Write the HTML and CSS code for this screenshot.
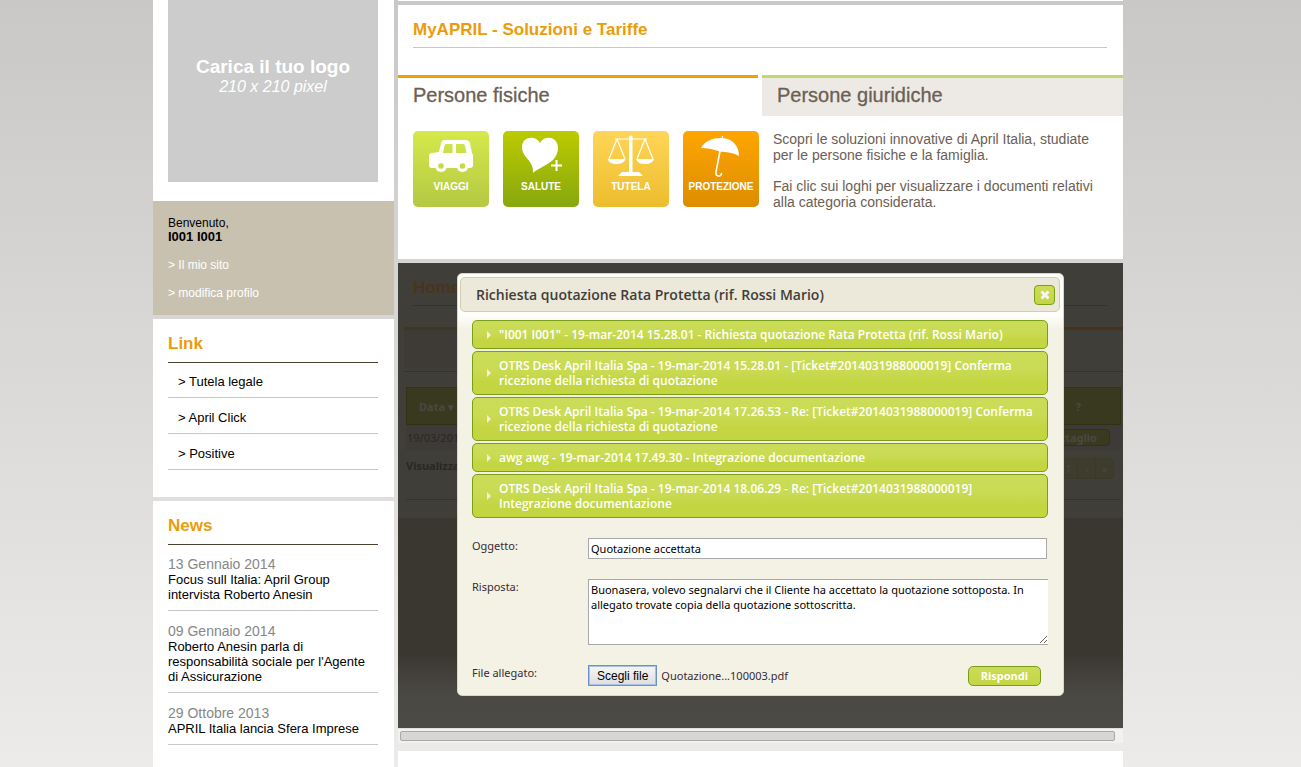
FILE: index.html
```html
<!DOCTYPE html>
<html lang="it">
<head>
<meta charset="utf-8">
<title>MyAPRIL - Soluzioni e Tariffe</title>
<link rel="stylesheet" href="styles.css">
</head>
<body>
<div class="page">
  <aside class="sidebar">
    <section class="brand-box">
      <div class="logo-placeholder"><strong>Carica il tuo logo</strong><em>210 x 210 pixel</em></div>
    </section>
    <section class="user-box">
      <p>Benvenuto,<br><strong>I001 I001</strong></p>
      <a href="#">&gt; Il mio sito</a>
      <a href="#">&gt; modifica profilo</a>
    </section>
    <section class="side-panel link-panel">
      <h2>Link</h2>
      <ul class="link-list">
        <li><a href="#">&gt; Tutela legale</a></li>
        <li><a href="#">&gt; April Click</a></li>
        <li><a href="#">&gt; Positive</a></li>
      </ul>
    </section>
    <section class="side-panel news-panel">
      <h2>News</h2>
      <ul class="news-list">
        <li><time>13 Gennaio 2014</time><a href="#">Focus sull Italia: April Group intervista Roberto Anesin</a></li>
        <li><time>09 Gennaio 2014</time><a href="#">Roberto Anesin parla di responsabilità sociale per l'Agente di Assicurazione</a></li>
        <li><time>29 Ottobre 2013</time><a href="#">APRIL Italia lancia Sfera Imprese</a></li>
      </ul>
    </section>
  </aside>

  <main class="main">
    <div class="top-strip"></div>
    <section class="solutions">
      <h1>MyAPRIL - Soluzioni e Tariffe</h1>
      <nav class="tabs">
        <a class="tab tab-active" href="#">Persone fisiche</a>
        <a class="tab tab-idle" href="#">Persone giuridiche</a>
      </nav>
      <div class="tab-body">
        <div class="tiles">
          <a class="tile tile-lime" href="#">
            <svg viewBox="0 0 76 76" aria-hidden="true">
              <path fill="#fff" fill-rule="evenodd" d="M31 9H53Q56 9 57 12L59 22Q60 23 60 25V34Q60 37 57 37H19Q16 37 16 34V25Q16 22 19 22L26 21L28 12Q29 9 31 9ZM33 13Q32 13 31.500 14.500L30 22H39.500V13ZM43 13V22H53.500L52 14.500Q51.500 13 50.500 13Z"/>
              <circle cx="28" cy="35" r="6" fill="#fff"/><circle cx="49.500" cy="35" r="6" fill="#fff"/>
              <circle cx="28" cy="35" r="2.800" fill="#c6da48"/><circle cx="49.500" cy="35" r="2.800" fill="#c6da48"/>
            </svg>
            <span>VIAGGI</span>
          </a>
          <a class="tile tile-green" href="#">
            <svg viewBox="0 0 76 76" aria-hidden="true">
              <path fill="#fff" d="M30 42C31 29 19 27 19 16C19 5 33 4 37 12C41 4 55 5 55 17C55 27 47 32 41 35C36 38 33 39 30 42Z"/>
              <path fill="none" stroke="#fff" stroke-width="2" d="M53.500 29V40M48 34.500H59"/>
            </svg>
            <span>SALUTE</span>
          </a>
          <a class="tile tile-yellow" href="#">
            <svg viewBox="0 0 76 76" aria-hidden="true">
              <path fill="none" stroke="#fff" stroke-width="1.200" d="M22 8H54M24 8L16 28M24 8L32 28M52 8L44 28M52 8L60 28"/>
              <path fill="#fff" d="M14.500 28H32.500Q31 33 23.500 33Q16 33 14.500 28ZM43 28H61Q59.500 33 52 33Q44.500 33 43 28ZM36 8H39.500V41H46L50 45H25L29 41H36Z"/>
              <circle cx="37.700" cy="6.500" r="2" fill="#fff"/>
            </svg>
            <span>TUTELA</span>
          </a>
          <a class="tile tile-orange" href="#">
            <svg viewBox="0 0 76 76" aria-hidden="true">
              <path fill="#fff" d="M38.800 5H40.200L40 7C50 8 56 15 56 25C51 22 44 21 37 20.500C30 18 24 17 18 17C22 10 29 7 38.500 7Z"/>
              <path fill="none" stroke="#fff" stroke-width="1.600" stroke-linecap="round" d="M37 20L33 41C32 46 38 46 38.500 42.500"/>
            </svg>
            <span>PROTEZIONE</span>
          </a>
        </div>
        <div class="intro">
          <p>Scopri le soluzioni innovative di April Italia, studiate per le persone fisiche e la famiglia.</p>
          <p>Fai clic sui loghi per visualizzare i documenti relativi alla categoria considerata.</p>
        </div>
      </div>
    </section>

    <section class="frame">
      <div class="viewport">
        <div class="backdrop-content" aria-hidden="true">
          <div class="ghost-title">Home</div>
          <div class="ghost-tabs"><span></span><span></span></div>
          <div class="ghost-table">
            <div class="ghost-head"><span>Data &#9662;</span><span class="ghost-help">?</span></div>
            <div class="ghost-row"><span>19/03/2014</span><span class="ghost-button">Dettaglio</span></div>
            <div class="ghost-foot"><b>Visualizza</b><span class="ghost-pages"><i>1</i><i>›</i><i>»</i></span></div>
          </div>
        </div>

        <div class="dialog" role="dialog" aria-labelledby="dialog-title">
          <header class="dialog-head">
            <h2 id="dialog-title">Richiesta quotazione Rata Protetta (rif. Rossi Mario)</h2>
            <button class="close" type="button" aria-label="Chiudi">
              <svg viewBox="0 0 10 10" aria-hidden="true"><path d="M1.500 1.500L8.500 8.500M8.500 1.500L1.500 8.500"/></svg>
            </button>
          </header>
          <div class="dialog-body">
            <div class="messages">
              <button type="button">"I001 I001" - 19-mar-2014 15.28.01 - Richiesta quotazione Rata Protetta (rif. Rossi Mario)</button>
              <button type="button">OTRS Desk April Italia Spa - 19-mar-2014 15.28.01 - [Ticket#2014031988000019] Conferma<br>ricezione della richiesta di quotazione</button>
              <button type="button">OTRS Desk April Italia Spa - 19-mar-2014 17.26.53 - Re: [Ticket#2014031988000019] Conferma<br>ricezione della richiesta di quotazione</button>
              <button type="button">awg awg - 19-mar-2014 17.49.30 - Integrazione documentazione</button>
              <button type="button">OTRS Desk April Italia Spa - 19-mar-2014 18.06.29 - Re: [Ticket#2014031988000019]<br>Integrazione documentazione</button>
            </div>
            <form class="reply">
              <label for="subject">Oggetto:</label>
              <input class="subject" id="subject" type="text" value="Quotazione accettata">
              <label for="answer">Risposta:</label>
              <textarea id="answer">Buonasera, volevo segnalarvi che il Cliente ha accettato la quotazione sottoposta. In allegato trovate copia della quotazione sottoscritta.</textarea>
              <span>File allegato:</span>
              <div class="file-row">
                <input class="file-input" id="attachment" type="file">
                <label class="file-button" for="attachment">Scegli file</label>
                <span class="file-name">Quotazione...100003.pdf</span>
                <button class="submit" type="button">Rispondi</button>
              </div>
            </form>
          </div>
        </div>
      </div>
      <div class="scrollbar"><div class="thumb"></div></div>
    </section>
    <div class="bottom-panel"></div>
  </main>
</div>
</body>
</html>
```
FILE: styles.css
```css
* { box-sizing: border-box; }
html { height: 100%; overflow: hidden; }
body {
  margin: 0;
  height: 100%;
  padding-right: 25px;
  overflow: hidden;
  background: linear-gradient(#c9c8c6, #ecebe9);
  font-family: "Liberation Sans", Arial, sans-serif;
  font-size: 13px;
  color: #000;
}
h1, h2, p, ul { margin: 0; padding: 0; }
ul { list-style: none; }
a { color: inherit; text-decoration: none; }
button, input, textarea { font: inherit; margin: 0; }

.page { display: flex; gap: 4px; max-width: 970px; min-height: 100%; margin: 0 auto; }
.sidebar { display: flex; flex-direction: column; flex: 0 0 241px; }
.main { display: flex; flex-direction: column; flex: 1; min-width: 0; }

/* Sidebar */
.brand-box { padding: 0 16px 19px 15px; background: #fff; }
.logo-placeholder {
  display: flex; flex-direction: column; align-items: center;
  height: 182px; padding-top: 57px;
  background: #ccc; color: #fff; font-size: 16px; line-height: 20px;
}
.logo-placeholder strong { font-size: 19px; }
.user-box {
  display: flex; flex-direction: column; gap: 14px;
  padding: 15px; margin-bottom: 4px;
  background: #c9c1af; font-size: 12px; line-height: 14px;
}
.user-box strong { font-size: 13px; }
.user-box a { color: #fff; }
.side-panel { padding: 15px 16px 0 15px; background: #fff; }
.side-panel h2 { padding-bottom: 9px; border-bottom: 1px solid #4b3f2f; color: #eb9c0a; font-size: 17px; line-height: 19px; }
.link-panel { padding-bottom: 27px; margin-bottom: 4px; }
.link-list li { padding: 12px 10px 7px; border-bottom: 1px solid #c8c8c8; line-height: 16px; }
.link-list li:first-child { padding-top: 11px; }
.news-panel { flex: 1; }
.news-list li { padding: 13px 0 8px; border-bottom: 1px solid #c8c8c8; line-height: 15px; }
.news-list li:first-child { padding-top: 12px; }
.news-list time { display: block; color: #878787; font-size: 14px; }
.news-list a { display: block; }

/* Solutions */
.top-strip { height: 1px; margin-bottom: 4px; background: #fff; }
.solutions { padding-bottom: 49px; margin-bottom: 4px; background: #fff; }
.solutions h1 {
  margin: 0 16px 27px 15px; padding: 15px 0 8px;
  border-bottom: 1px solid #c8c8c8; color: #eb9c0a; font-size: 17px; line-height: 19px;
}
.tabs { display: grid; grid-template-columns: 360fr 361fr; gap: 4px; }
.tab { padding: 6px 15px 9px; border-top: 3px solid; color: #6b6054; font-size: 20px; line-height: 23px; -webkit-text-stroke: 0.3px #6b6054; }
.tab-active { border-color: #f49f00; }
.tab-idle { border-color: #c4d670; background: #edeae5; }
.tab-body { display: flex; gap: 14px; padding: 15px 15px 0; }
.tiles { display: flex; gap: 14px; }
.tile { display: grid; width: 76px; height: 76px; border-radius: 5px; color: #fff; font-size: 10px; font-weight: bold; text-align: center; }
.tile svg, .tile span { grid-area: 1 / 1; }
.tile svg { width: 76px; height: 76px; }
.tile span { padding-top: 50px; line-height: 12px; }
.tile-lime { background: linear-gradient(#d5e94c, #b4c843); }
.tile-green { background: linear-gradient(#bccb00, #87a70f); }
.tile-yellow { background: linear-gradient(#fed557, #edbd2e); }
.tile-orange { background: linear-gradient(#ffa500, #dc8d00); }
.intro { display: flex; flex-direction: column; flex: 1; gap: 15px; color: #6b6054; font-size: 14px; line-height: 16px; }

/* Embedded frame */
.frame { margin-bottom: 8px; }
.viewport {
  position: relative; padding: 10px 59px 32px;
  background: linear-gradient(#403e39 0, #403e39 254px, #3a3731 256px, #3a3731 390px, #4a4842 430px, #4d4b45 465px);
}
.backdrop-content {
  position: absolute; inset: 0; overflow: hidden;
  color: #292824; font-family: "Noto Sans", sans-serif; font-size: 11px;
}
.ghost-title { margin: 0 16px 0 15px; padding: 15px 0 7px; border-bottom: 1px solid #34332e; color: #47351d; font: bold 17px/20px "Liberation Sans", sans-serif; }
.ghost-tabs { display: flex; gap: 4px; height: 45px; margin: 21px 0 15px 6px; border-bottom: 1px solid #34332e; }
.ghost-tabs span { flex: 1; height: 41px; border-top: 3px solid #3b3a20; background: #3e3a36; }
.ghost-tabs span + span { border-color: #493219; background: none; }
.ghost-table { margin: 0 2px 0 8px; border-bottom: 1px solid #34332e; }
.ghost-head { display: flex; align-items: center; justify-content: space-between; height: 38px; padding: 0 39px 0 12px; border: 1px solid #303216; background: #39391f; color: #494843; font-weight: bold; }
.ghost-row { display: flex; align-items: center; justify-content: space-between; height: 25px; padding: 0 11px 0 1px; background: #3d3a37; }
.ghost-button { padding: 0 12px; border: 1px solid #303216; border-radius: 4px; background: #3a3a20; color: #494843; font-weight: bold; line-height: 15px; }
.ghost-foot { display: flex; justify-content: space-between; padding: 8px 7px 20px 0; }
.ghost-pages { display: flex; border: 1px solid #3a3a28; border-radius: 4px; background: #3d3c2d; }
.ghost-pages i { width: 18px; border-left: 1px solid #39392a; color: #494843; font-style: normal; line-height: 19px; text-align: center; }

/* Dialog */
.dialog {
  position: relative; padding: 3px 3px 9px 2px;
  border: 1px solid #d9d6c4; border-radius: 5px;
  background: linear-gradient(#fdfdf9 0, #fdfdf9 42px, #f4f2e5 56px);
  color: #362b36; font-family: "Noto Sans", sans-serif; font-size: 11px;
}
.dialog-head {
  display: flex; align-items: center; justify-content: space-between;
  height: 35px; padding: 0 4px 0 15px; border: 1px solid #d4ccb0; border-radius: 5px; background: #ece8da;
}
.dialog-head h2 { color: #403e39; font-family: "Open Sans", sans-serif; font-size: 14px; font-weight: 600; line-height: 18px; }
.close { display: grid; place-items: center; width: 21px; height: 20px; padding: 0; border: 1px solid #7a9e18; border-radius: 4px; background: linear-gradient(#cbdc59, #c3d642); }
.close svg { width: 10px; height: 10px; fill: none; stroke: #f5f5f5; stroke-width: 3; }
.dialog-body { padding: 8px 12px 0; }
.messages { display: flex; flex-direction: column; gap: 2px; }
.messages button {
  position: relative; padding: 6px 6px 6px 26px; border: 1px solid #7a9e18; border-radius: 5px;
  background: linear-gradient(#cbdc59, #c9da53 45%, #c3d642 70%);
  color: #fff; font-family: "Open Sans", sans-serif; font-size: 12px; font-weight: 600; line-height: 15px; text-align: left;
}
.messages button::before {
  content: ""; position: absolute; left: 14px; top: 50%; margin-top: -4px;
  border: 4px solid transparent; border-left-color: #f0f0e8; border-right: 0;
}
.reply { display: grid; grid-template-columns: 116px 1fr; row-gap: 20px; padding-top: 20px; line-height: 16px; }
.subject { height: 21px; margin-right: 1px; padding: 1px 2px; border: 1px solid #a9a9a9; border-radius: 0; background: #fff; color: #000; }
.reply textarea { display: block; width: 100%; height: 66px; padding: 2px; border: 1px solid #a9a9a9; border-right: 0; border-radius: 0; background: #fff; color: #000; line-height: 15px; resize: both; }
.file-row { position: relative; display: flex; align-items: center; padding-right: 7px; }
.file-input { position: absolute; width: 69px; height: 20px; opacity: 0; }
.file-button { padding: 2px 8px 0; border: 1px solid #6c90cf; outline: 1px solid #a9c0e8; outline-offset: -2px; background: linear-gradient(#f6f6f6, #dedede); color: #000; font-family: "Liberation Sans", Arial, sans-serif; font-size: 12px; line-height: 17px; }
.file-name { margin-left: 4px; }
.submit { margin-left: auto; padding: 1px 12px 2px; border: 1px solid #7a9e18; border-radius: 5px; background: linear-gradient(#cbdc59, #c3d642); color: #fff; font-weight: bold; line-height: 15px; }

.scrollbar { padding: 2px 8px 2px 2px; border-top: 1px solid #e1e0da; background: #f1f1f1; }
.thumb { height: 10px; border: 1px solid #a8a8a8; border-radius: 2px; background: #d6d6d6; }
.bottom-panel { flex: 1; background: #fff; }
```
